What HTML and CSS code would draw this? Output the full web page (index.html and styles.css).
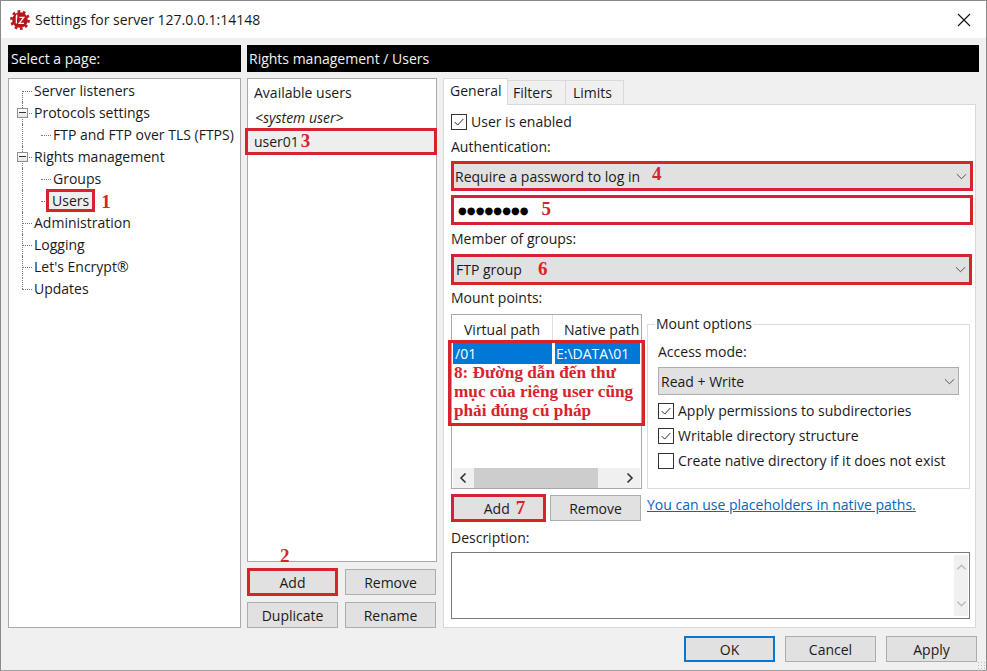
FILE: index.html
```html
<!DOCTYPE html>
<html lang="en">
<head>
<meta charset="utf-8">
<title>Settings for server 127.0.0.1:14148</title>
<link rel="stylesheet" href="styles.css">
</head>
<body>
<div class="window">
  <header class="titlebar">
    <svg class="logo" viewBox="0 0 20 20" width="20" height="20">
      <circle cx="10" cy="10" r="8.6" fill="none" stroke="#b5161b" stroke-width="2.6" stroke-dasharray="2.7 2.7"/>
      <circle cx="10" cy="10" r="7.8" fill="#b5161b"/>
      <path d="M6.4 7.2h1.2M7.4 4.8c-.8 0-1 .6-1 1.4v7.4M9.4 7.4h4.4l-4.6 6h4.8" fill="none" stroke="#fff" stroke-width="1.3"/>
    </svg>
    <span class="title-text">Settings for server 127.0.0.1:14148</span>
    <svg class="close" viewBox="0 0 14 14" width="14" height="14"><path d="M1 1l12 12M13 1L1 13" stroke="#111" stroke-width="1.1" fill="none"/></svg>
  </header>

  <main class="content">
    <div class="black-head">Select a page:</div>
    <div class="black-head">Rights management / Users</div>

    <nav class="tree">
      <div class="node leaf first">Server listeners</div>
      <div class="node parent"><span class="exp"></span>Protocols settings</div>
      <div class="node child only">FTP and FTP over TLS (FTPS)</div>
      <div class="node parent"><span class="exp"></span>Rights management</div>
      <div class="node child">Groups</div>
      <div class="node child"><span class="tree-sel">Users</span><span class="num num-tree">1</span></div>
      <div class="node leaf">Administration</div>
      <div class="node leaf">Logging</div>
      <div class="node leaf">Let's Encrypt®</div>
      <div class="node leaf last">Updates</div>
    </nav>

    <section class="split">
      <div class="users-col">
        <div class="users-list">
          <div class="users-head">Available users</div>
          <div class="user-item italic">&lt;system user&gt;</div>
          <div class="user-selected">user01<span class="num num-user">3</span></div>
        </div>
        <div class="btn-grid">
          <button class="btn btn-red">Add<span class="num num-over">2</span></button>
          <button class="btn">Remove</button>
          <button class="btn">Duplicate</button>
          <button class="btn">Rename</button>
        </div>
      </div>

      <div class="tabs-col">
        <div class="tabs">
          <div class="tab active">General</div>
          <div class="tab">Filters</div>
          <div class="tab">Limits</div>
        </div>
        <div class="panel">
          <label class="check first-check"><span class="box on"><svg viewBox="0 0 16 16"><path d="M3 8l3.5 3.5L13 4.5" fill="none" stroke="#222" stroke-width="1.1"/></svg></span>User is enabled</label>
          <div class="label auth">Authentication:</div>
          <div class="combo red-box auth-combo"><span>Require a password to log in<span class="num num-auth">4</span></span><svg class="chev" viewBox="0 0 12 7"><path d="M1 1l5 5 5-5" fill="none" stroke="#444" stroke-width="1"/></svg></div>
          <div class="pass red-box"><span class="dots">●●●●●●●●</span><span class="num num-pass">5</span></div>
          <div class="label groups">Member of groups:</div>
          <div class="combo red-box group-combo"><span>FTP group<span class="num num-group">6</span></span><svg class="chev" viewBox="0 0 12 7"><path d="M1 1l5 5 5-5" fill="none" stroke="#444" stroke-width="1"/></svg></div>
          <div class="label mounts">Mount points:</div>

          <div class="mount-row">
            <div class="mount-left">
              <div class="mount-list">
                <div class="mount-head"><span class="col-a">Virtual path</span><span class="col-b">Native path</span></div>
                <div class="annot">
                  <div class="mount-sel"><span class="cell-a">/01</span><span class="cell-b">E:\DATA\01</span></div>
                  <div class="annot-text">8: Đường dẫn đến thư<br>mục của riêng user cũng<br>phải đúng cú pháp</div>
                </div>
                <div class="hscroll">
                  <svg class="arrow" viewBox="0 0 8 12"><path d="M6.5 1.5L2 6l4.500 4.500" fill="none" stroke="#333" stroke-width="1.6"/></svg>
                  <span class="thumb"></span>
                  <svg class="arrow" viewBox="0 0 8 12"><path d="M1.500 1.500L6 6l-4.500 4.500" fill="none" stroke="#333" stroke-width="1.6"/></svg>
                </div>
              </div>
              <div class="mount-btns">
                <button class="btn btn-red add-mount">Add<span class="num num-add">7</span></button>
                <button class="btn">Remove</button>
              </div>
            </div>
            <div class="mount-right">
              <fieldset class="options">
                <legend>Mount options</legend>
                <div class="label access">Access mode:</div>
                <div class="combo plain"><span>Read + Write</span><svg class="chev" viewBox="0 0 12 7"><path d="M1 1l5 5 5-5" fill="none" stroke="#444" stroke-width="1"/></svg></div>
                <label class="check opt first-opt"><span class="box on"><svg viewBox="0 0 16 16"><path d="M3 8l3.500 3.500L13 4.500" fill="none" stroke="#222" stroke-width="1.100"/></svg></span>Apply permissions to subdirectories</label>
                <label class="check opt"><span class="box on"><svg viewBox="0 0 16 16"><path d="M3 8l3.500 3.500L13 4.500" fill="none" stroke="#222" stroke-width="1.100"/></svg></span>Writable directory structure</label>
                <label class="check opt"><span class="box"></span>Create native directory if it does not exist</label>
              </fieldset>
              <a class="link" href="#">You can use placeholders in native paths.</a>
            </div>
          </div>

          <div class="label desc">Description:</div>
          <div class="desc-box">
            <div class="vscroll">
              <svg viewBox="0 0 12 8"><path d="M1.500 6.500L6 2l4.500 4.500" fill="none" stroke="#bcbcbc" stroke-width="1.600"/></svg>
              <svg viewBox="0 0 12 8"><path d="M1.500 1.500L6 6l4.500-4.500" fill="none" stroke="#bcbcbc" stroke-width="1.600"/></svg>
            </div>
          </div>
        </div>
      </div>
    </section>
  </main>

  <footer class="footer">
    <button class="btn btn-primary">OK</button>
    <button class="btn">Cancel</button>
    <button class="btn">Apply</button>
    <span class="grip"></span>
  </footer>
</div>
</body>
</html>
```

FILE: styles.css
```css
* { box-sizing: border-box; }
html, body { margin: 0; padding: 0; }
body {
  width: 987px;
  height: 671px;
  overflow: hidden;
  font-family: "Open Sans", "Noto Sans", sans-serif;
  font-size: 14px;
  color: #1a1a1a;
  background: #f0f0f0;
}
.window {
  width: 987px;
  height: 671px;
  display: flex;
  flex-direction: column;
  border: 1px solid #8a8a8a;
  border-bottom-color: #a0a0a0;
  background: #f0f0f0;
}
.titlebar {
  height: 37px;
  flex: none;
  display: flex;
  align-items: center;
  background: #fff;
  padding-left: 9px;
  padding-right: 15px;
}
.logo { flex: none; margin-right: 5px; }
.title-text { flex: 1; }
.close { flex: none; }

.content {
  flex: none;
  display: grid;
  grid-template-columns: 233px 732px;
  grid-template-rows: 27px 550px;
  column-gap: 6px;
  row-gap: 6px;
  padding: 7px 0 0 7px;
}
.black-head {
  background: #000;
  color: #f2f2f2;
  line-height: 27px;
  padding-left: 3px;
}
.black-head + .black-head { padding-left: 2px; }
.tree {
  background: #fff;
  border: 1px solid #a9a9a9;
  padding-top: 1px;
}
.node {
  position: relative;
  height: 22px;
  line-height: 21px;
  padding-left: 25px;
  white-space: nowrap;
}
.node.child { padding-left: 44px; }
.node::before {
  content: "";
  position: absolute;
  left: 13px;
  top: 0;
  height: 22px;
  border-left: 1px dotted #777;
}
.node::after {
  content: "";
  position: absolute;
  left: 13px;
  top: 11px;
  width: 10px;
  border-top: 1px dotted #777;
}
.node.first::before { top: 11px; height: 11px; }
.node.last::before { height: 11px; }
.node.child::after { left: 32px; width: 10px; }
.exp {
  position: absolute;
  z-index: 1;
  left: 8px;
  top: 6px;
  width: 11px;
  height: 10px;
  border: 1px solid #8e8f8f;
  background: linear-gradient(#fff, #e4e4e4);
}
.exp::after {
  content: "";
  position: absolute;
  left: 1px;
  right: 1px;
  top: 3px;
  border-top: 1px solid #333;
}
.tree-sel {
  position: relative;
  z-index: 1;
  display: inline-block;
  margin: -1px 6px 0 -7px;
  padding: 1px 6px 0;
  height: 23px;
  line-height: 21px;
  vertical-align: top;
  background: #eee;
  outline: 3px solid #d7232e;
  outline-offset: -3px;
}
.num {
  font-family: "Liberation Serif", serif;
  font-weight: 700;
  font-size: 19px;
  line-height: 0;
  color: #d7232e;
}
.num-tree { vertical-align: -2px; }
.split {
  display: flex;
  gap: 6px;
}
.users-col {
  width: 190px;
  flex: none;
  display: flex;
  flex-direction: column;
}
.users-list {
  height: 485px;
  background: #fff;
  border: 1px solid #a9a9a9;
}
.users-head { height: 27px; line-height: 27px; padding-left: 6px; }
.user-item { height: 22px; line-height: 24px; padding-left: 7px; }
.italic { font-style: italic; }
.user-selected {
  height: 27px;
  line-height: 21px;
  margin: 0 0 0 -3px;
  width: 192px;
  background: #eee;
  border: 3px solid #d7232e;
  padding-left: 6px;
}
.num-user { margin-left: 2px; }
.btn-grid {
  display: grid;
  grid-template-columns: 91px 91px;
  column-gap: 7px;
  grid-auto-rows: 26px;
  row-gap: 7px;
  margin-top: 7px;
}
.btn {
  position: relative;
  font: inherit;
  color: inherit;
  padding: 0;
  height: 26px;
  background: #e1e1e1;
  border: 1px solid #adadad;
}
.btn-red {
  background: #e1e1e1;
  border: 3px solid #d7232e;
}
.btn-grid .btn-red { height: 28px; margin-top: -1px; }
.num-over {
  position: absolute;
  left: 30px;
  top: -15px;
}
.tabs-col {
  width: 533px;
  flex: none;
  display: flex;
  flex-direction: column;
}
.tabs { display: flex; height: 26px; flex: none; align-items: flex-end; }
.tab {
  height: 24px;
  line-height: 23px;
  width: 58px;
  background: #f0f0f0;
  border: 1px solid #d9d9d9;
  border-left: 0;
  border-bottom: 0;
  padding: 0 0 0 5px;
}
.tab:last-child { padding-left: 7px; }
.tab.active {
  width: 65px;
  height: 27px;
  line-height: 24px;
  background: #fff;
  border: 1px solid #d9d9d9;
  border-bottom: 0;
  padding-left: 6px;
  margin-bottom: -1px;
  position: relative;
  z-index: 1;
}
.panel {
  height: 524px;
  background: #fff;
  border: 1px solid #d9d9d9;
  padding: 0 5px 0 7px;
}
.label { line-height: 20px; }
.check { display: flex; align-items: center; line-height: 20px; white-space: nowrap; }
.box {
  width: 16px;
  height: 16px;
  flex: none;
  margin-right: 4px;
  border: 1px solid #333;
  background: #fff;
}
.box svg { display: block; width: 14px; height: 14px; }
.first-check { margin-top: 7px; }
.auth { margin-top: 5px; }
.combo {
  display: flex;
  align-items: center;
  justify-content: space-between;
  background: #e1e1e1;
  border: 1px solid #adadad;
  padding: 0 3px 0 1px;
}
.chev { width: 11px; height: 7px; flex: none; }
.red-box {
  border: 3px solid #d7232e;
  margin-left: 0;
  width: 522px;
}
.auth-combo { margin-top: 4px; height: 30px; }
.num-auth { margin-left: 12px; vertical-align: 2px; }
.pass {
  display: flex;
  align-items: center;
  height: 30px;
  margin-top: 4px;
  background: #fff;
  padding-left: 4px;
}
.dots { font-family: "DejaVu Sans", sans-serif; font-size: 10px; letter-spacing: 0.1px; color: #000; }
.num-pass { margin-left: 13px; margin-bottom: 3px; }
.groups { margin-top: 4px; }
.group-combo { margin-top: 5px; height: 31px; width: 521px; }
.group-combo span:first-child { padding-left: 1px; }
.num-group { margin-left: 15px; }
.mounts { margin-top: 3px; }
.mount-row { display: flex; margin-top: 6px; }
.mount-left { width: 191px; flex: none; }
.mount-list {
  position: relative;
  height: 175px;
  border: 1px solid #a9a9a9;
  background: #fff;
  display: flex;
  flex-direction: column;
}
.mount-head {
  display: flex;
  height: 25px;
  line-height: 29px;
  flex: none;
}
.col-a { width: 101px; padding-left: 12px; border-right: 1px solid #e0e0e0; }
.col-b { padding-left: 11px; white-space: nowrap; overflow: hidden; flex: 1; }
.annot {
  position: relative;
  height: 86px;
  flex: none;
  margin: 0 -4px;
  border: 3px solid #d7232e;
  padding: 0 2px;
}
.mount-sel { display: flex; height: 21px; line-height: 21px; }
.cell-a { width: 99px; background: #0078d7; color: #fff; padding-left: 2px; }
.cell-b { margin-left: 3px; flex: 1; background: #0078d7; color: #fff; padding-left: 1px; white-space: nowrap; }
.annot-text {
  font-family: "Liberation Serif", serif;
  font-weight: 700;
  font-size: 17.2px;
  line-height: 19px;
  color: #d7232e;
  padding-left: 1px;
  margin-top: -1px;
  white-space: nowrap;
}
.hscroll {
  margin: auto 1px 0;
  height: 20px;
  flex: none;
  display: flex;
  align-items: center;
  background: #f0f0f0;
  justify-content: space-between;
}
.arrow { width: 8px; height: 12px; margin: 0 6px; flex: none; }
.thumb { width: 124px; height: 20px; background: #cdcdcd; margin: 0 auto 0 1px; }
.mount-btns { display: flex; align-items: center; gap: 4px; margin-top: 5px; height: 28px; }
.mount-btns .btn { width: 91px; }
.mount-btns .add-mount { height: 28px; width: 95px; padding-left: 12px; }
.num-add { margin-left: 6px; }
.mount-right { margin-left: 5px; width: 323px; flex: none; }
.options {
  margin: 0;
  padding: 0 10px 0 10px;
  height: 175px;
  border: 1px solid #dcdcdc;
  min-width: 0;
}
.options legend { padding: 0 1px; margin-left: -3px; line-height: 20px; }
.access { margin-top: 8px; }
.plain { height: 28px; width: 301px; margin-top: 5px; padding-left: 2px; border-color: #adadad; }
.opt { height: 25px; }
.first-opt { margin-top: 3px; }
.link {
  display: block;
  margin-top: 6px;
  color: #0067c0;
  white-space: nowrap;
  line-height: 20px;
}
.desc { margin-top: 6px; }
.desc-box {
  display: flex;
  justify-content: flex-end;
  margin-top: 4px;
  width: 519px;
  height: 67px;
  background: #fff;
  border: 1px solid #7a7a7a;
  padding: 2px 1px 2px 0;
}
.vscroll {
  width: 14px;
  background: #f0f0f0;
  display: flex;
  flex-direction: column;
  justify-content: space-between;
  align-items: center;
  padding: 8px 0;
}
.vscroll svg { width: 11px; height: 8px; }
.footer {
  position: relative;
  flex: 1;
  display: flex;
  justify-content: flex-end;
  align-items: flex-start;
  gap: 10px;
  padding: 8px 9px 0 0;
}
.footer .btn { width: 91px; }
.btn-primary { border: 2px solid #0078d7; }
.grip {
  position: absolute;
  right: 0;
  bottom: 0;
  width: 9px;
  height: 9px;
  background: radial-gradient(circle, #b8b8b8 1px, transparent 1px) 0 0 / 3px 3px;
}
```
